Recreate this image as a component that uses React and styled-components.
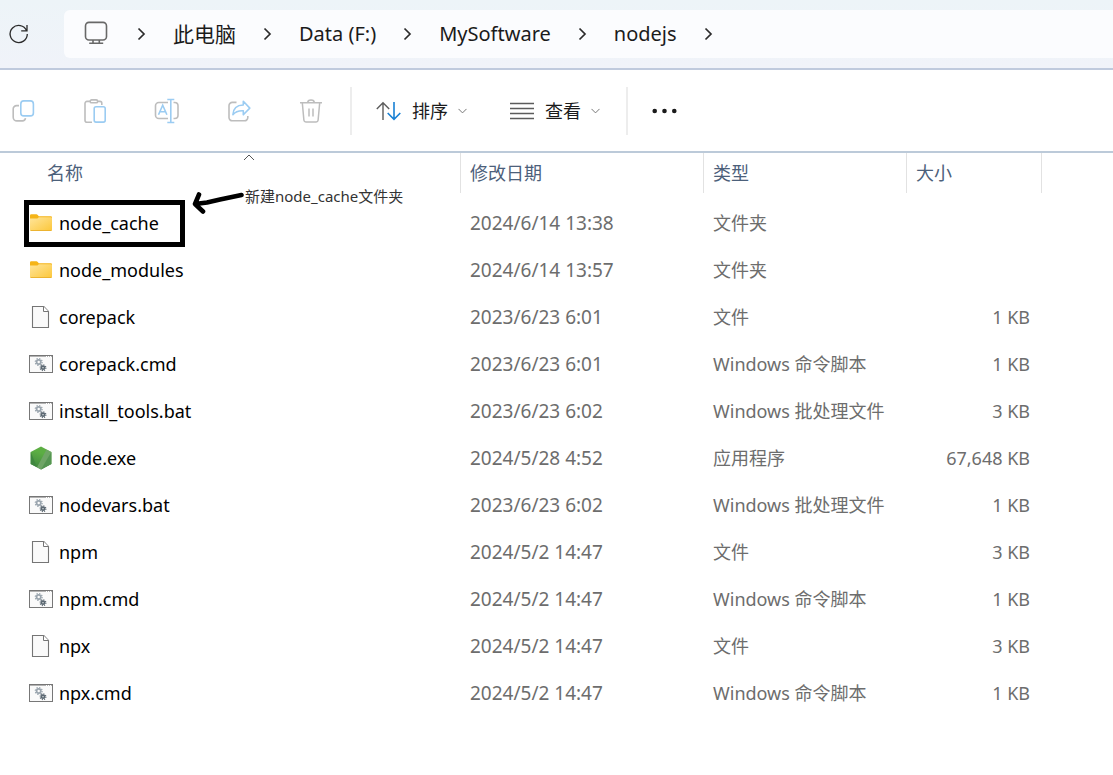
import React from "react";
import styled, { createGlobalStyle } from "styled-components";

const GlobalStyle = createGlobalStyle`
  * { box-sizing: border-box; }
  body {
    margin: 0;
    background: #ffffff;
    color: #1b1b1b;
    font-family: "Noto Sans", "Noto Sans CJK SC", sans-serif;
    font-size: 18px;
    line-height: 24px;
  }
  button {
    margin: 0;
    padding: 0;
    border: 0;
    background: none;
    color: inherit;
    font: inherit;
    cursor: pointer;
  }
  svg { display: block; flex: none; fill: none; }
`;

const AddressRow = styled.header`
  display: flex;
  align-items: center;
  height: 70px;
  padding-left: 8px;
  gap: 34px;
  background: linear-gradient(#edf4f8, #f0f3f9);
  border-bottom: 2px solid #bfcadd;
`;

const RefreshButton = styled.button`
  width: 22px;
  height: 22px;
`;

const AddressBar = styled.nav`
  display: flex;
  flex: 1;
  align-items: center;
  gap: 27px;
  height: 48px;
  padding-left: 20px;
  background: #fbfcfe;
  border-radius: 6px 0 0 6px;
  font-size: 20px;
  line-height: 28px;
`;

const Device = styled.span`
  margin-right: 2px;
  padding-bottom: 2px;
`;

const Crumb = styled.a`
  color: #1b1b1b;
  font-size: ${(p) => (p.$han ? 21 : 20)}px;
  text-decoration: none;
  white-space: nowrap;
`;

const Toolbar = styled.div`
  display: flex;
  align-items: center;
  height: 83px;
  border-bottom: 2px solid #bccad9;
`;

const ToolGroup = styled.div`
  display: flex;
  gap: 26px;
  margin-right: 16px;
`;

const ToolButton = styled.button`
  display: flex;
  align-items: center;
  justify-content: center;
  width: 46px;
  height: 46px;

  &:disabled { cursor: default; }
`;

const MenuGroup = styled.div`
  display: flex;
  align-items: center;
  gap: 42px;
  padding: 0 26px 0 24px;
  height: 48px;
  border: solid #ededed;
  border-width: 0 2px;
`;

const MenuButton = styled.button`
  display: flex;
  align-items: center;
  gap: 10px;
  white-space: nowrap;
`;

const MoreButton = styled.button`
  padding: 8px 24px;
`;

const FileTable = styled.table`
  width: 100%;
  table-layout: fixed;
  border-collapse: collapse;
`;

const Column = styled.col`
  width: ${(p) => (p.$width ? `${p.$width}px` : "auto")};
`;

const HeadCell = styled.th`
  height: 47px;
  padding: 0 0 0 ${(p) => (p.$first ? 38 : 0)}px;
  vertical-align: top;
  font-weight: 400;
`;

const HeadButton = styled.button`
  position: relative;
  display: block;
  width: 100%;
  height: 40px;
  padding-left: 9px;
  border-right: 1px solid #e2e2e2;
  color: #4c607a;
  text-align: left;
`;

const SortMark = styled.span`
  position: absolute;
  top: 1px;
  left: 50%;
  transform: translateX(-50%);
`;

const Cell = styled.td`
  height: 47px;
  padding: 0 12px 2px 9px;
  color: #6d6d6d;
  font-size: ${(p) => (p.$date ? 19 : 18)}px;
  text-align: ${(p) => p.$align || "left"};
  white-space: nowrap;
`;

const NameCell = styled.td`
  position: relative;
  height: 47px;
  padding: 0 0 2px 29px;
`;

const FileButton = styled.button`
  display: flex;
  align-items: center;
  gap: 6px;
  color: #000000;
  white-space: nowrap;
`;

const Highlight = styled.span`
  position: absolute;
  top: 0;
  left: 24px;
  width: 161px;
  height: 47px;
  border: 5px solid #000000;
  pointer-events: none;
`;

const Note = styled.span`
  position: absolute;
  top: -14px;
  left: 190px;
  display: flex;
  gap: 1px;
  color: #333333;
  font-size: 15px;
  line-height: 20px;
  white-space: nowrap;
  pointer-events: none;
`;

const GREY = "#bdbdbd";
const BLUE = "#9bccf2";

const RefreshIcon = () => (
  <svg width="22" height="22" viewBox="0 0 22 22" stroke="#2b2b2b" strokeWidth="1.3">
    <path d="M18.6 7.6A8.6 8.6 0 1 0 19.3 11M19 2v5.8h-5.8" />
  </svg>
);

const MonitorIcon = () => (
  <svg width="24" height="24" viewBox="0 0 24 24" stroke="#686868" strokeWidth="1.6">
    <rect x="1.5" y="1.4" width="21" height="17.6" rx="3.5" />
    <path d="M9 19v3M15.3 19v3M5.2 22.3h14" />
  </svg>
);

const CrumbArrow = () => (
  <svg width="9" height="14" viewBox="0 0 9 14" stroke="#2b2b2b" strokeWidth="1.7" aria-hidden="true">
    <path d="M1.5 1.5 7 7l-5.5 5.5" />
  </svg>
);

const CopyIcon = () => (
  <svg width="24" height="24" viewBox="0 0 24 24" strokeWidth="1.6">
    <path stroke={GREY} d="M8 6.6H5.6A3.4 3.4 0 0 0 2.2 10v8.2a3.7 3.7 0 0 0 3.7 3.7h5.6q2.6 0 3-2.7" />
    <rect stroke={BLUE} x="9.8" y="1.9" width="12.600" height="15" rx="3" />
  </svg>
);

const PasteIcon = () => (
  <svg width="24" height="24" viewBox="0 0 24 24" strokeWidth="1.6">
    <path stroke={GREY} d="M7.5 2.4H4a2 2 0 0 0-2 2v16.8a2 2 0 0 0 2 2h5M14.5 2.4H17a1.800 1.800 0 0 1 1.800 1.800V6" />
    <rect stroke={GREY} x="7.2" y="0.9" width="7.4" height="2.9" rx="1.4" />
    <rect stroke={BLUE} x="11.2" y="7.7" width="11" height="15.4" rx="1.8" />
  </svg>
);

const RenameIcon = () => (
  <svg width="26" height="26" viewBox="0 0 26 26" strokeWidth="1.6">
    <path stroke={GREY} d="M14 4.5H4.8a3.300 3.300 0 0 0-3.300 3.300v9.400a3.300 3.300 0 0 0 3.300 3.300H14M19.500 4.500h1.200a3.300 3.300 0 0 1 3.300 3.300v9.400a3.300 3.300 0 0 1-3.300 3.300h-1.200" />
    <path stroke={BLUE} d="M16.800 1.500v23M13.300 1.500h7M13.300 24.500h7M4.500 16.800l4.200-9.500 4.200 9.500M6 13.800h5.400" />
  </svg>
);

const ShareIcon = () => (
  <svg width="24" height="24" viewBox="0 0 24 24" strokeWidth="1.6" strokeLinejoin="round">
    <path stroke={GREY} d="M9.500 3.400H5.300A3.300 3.300 0 0 0 2 6.700v11.800a3.300 3.300 0 0 0 3.300 3.300h12.200a3.300 3.300 0 0 0 3.300-3.300V17" />
    <path stroke={BLUE} d="M16.300 2.200 22.800 9.100l-6.500 6.700v-4c-4.500-.2-8 .9-10.400 3.900C6.200 9.900 9.600 6.100 16.300 6z" />
  </svg>
);

const TrashIcon = () => (
  <svg width="24" height="24" viewBox="0 0 24 24" strokeWidth="1.5" stroke={GREY}>
    <path d="M1 3.700h22M8.700 3.700C8.700 2 10 1 12 1s3.300 1 3.300 2.700M3.300 3.700l1.600 17.500a2 2 0 0 0 2 1.800h10.200a2 2 0 0 0 2-1.800l1.600-17.500M10 9.500v8M14 9.500v8" />
  </svg>
);

const SortIcon = () => (
  <svg width="26" height="20" viewBox="0 0 26 20" strokeWidth="1.4">
    <path stroke="#5c5c5c" d="M7 19V1.800M.800 7.900 7 1.700l6.200 6.200" />
    <path stroke="#1880d4" strokeWidth="1.6" d="M18 1v17.200M11.700 12 18 18.300 24.300 12" />
  </svg>
);

const ListIcon = () => (
  <svg width="26" height="18" viewBox="0 0 26 18" stroke="#5c5c5c" strokeWidth="1.3">
    <path d="M1 1.500h24M1 6.500h24M1 11.500h24M1 16.500h24" />
  </svg>
);

const DownIcon = () => (
  <svg width="9" height="6" viewBox="0 0 9 6" stroke="#777777" aria-hidden="true">
    <path d="m.5.900 4 4 4-4" />
  </svg>
);

const UpIcon = () => (
  <svg width="12" height="7" viewBox="0 0 12 7" stroke="#555555">
    <path d="m1 6 5-5 5 5" />
  </svg>
);

const MoreIcon = () => (
  <svg width="26" height="6" viewBox="0 0 26 6">
    <g fill="#1b1b1b">
      <circle cx="2.700" cy="3" r="2.300" />
      <circle cx="12.500" cy="3" r="2.300" />
      <circle cx="22.300" cy="3" r="2.300" />
    </g>
  </svg>
);

const FolderIcon = () => (
  <svg width="24" height="24" viewBox="0 0 24 24">
    <defs>
      <linearGradient id="folderFront" x1="0" y1="0" x2="1" y2="1">
        <stop offset="0" stopColor="#ffe59b" />
        <stop offset="1" stopColor="#fcc73a" />
      </linearGradient>
    </defs>
    <path fill="#f5b417" d="M1 4.500Q1 3.300 2.200 3.300h5.200q.8 0 1.300.7l1.100 1.200h12.100q1.100 0 1.100 1.100V8H1z" />
    <path fill="url(#folderFront)" d="M1 7.600h6.800q.7 0 1.200-.6l.8-.800H22q1 0 1 1v11.600q0 1.100-1.100 1.100H2.100Q1 19.900 1 18.800z" />
    <path stroke="#eab02c" strokeWidth=".9" d="M1.500 19.500h21" />
  </svg>
);

const PageIcon = () => (
  <svg width="24" height="24" viewBox="0 0 24 24" stroke="#757575">
    <path fill="#fafafa" strokeWidth="1.100" d="M3.500 1.500h11.300l4.700 5v16h-16z" />
    <path fill="#ffffff" d="M14.500 1.500v5h5" />
  </svg>
);

const Gear = ({ x, y, r, color }) => (
  <g transform={`translate(${x} ${y})`} stroke={color}>
    <circle r={r} strokeWidth="1.700" />
    <circle r={r + 1.300} strokeWidth="1.300" strokeDasharray={`${(r + 1.3) * 0.39} ${(r + 1.3) * 0.395}`} />
  </g>
);

const ScriptIcon = () => (
  <svg width="24" height="24" viewBox="0 0 24 24">
    <rect x=".5" y="3.500" width="23" height="17" fill="#fafafa" stroke="#777777" />
    <path stroke="#777777" strokeWidth="1.500" d="M0 3.800h24" />
    <path stroke="#ffffff" strokeDasharray="1 1" d="M17 4.500h5" />
    <Gear x={9.7} y={10} r={2.1} color="#9aa5ae" />
    <Gear x={14} y={15.7} r={1.5} color="#5b6872" />
  </svg>
);

const NodeIcon = () => (
  <svg width="24" height="24" viewBox="0 0 24 24">
    <defs>
      <linearGradient id="nodeFace" x1="0.700" y1="0" x2="0.400" y2="1">
        <stop offset="0.300" stopColor="#5cae43" />
        <stop offset="1" stopColor="#3f873f" />
      </linearGradient>
    </defs>
    <path fill="url(#nodeFace)" d="M12 .500 22.300 6v12L12 23.500 1.700 18V6z" />
    <path fill="#3f873f" d="M1.700 6 8 21.300 1.700 18z" />
    <path fill="#6fa566" d="m17.500 3.400 4.800 2.600v12L12 23.500l-4-2.200z" />
    <path fill="#559552" d="M22.300 6v12L12 23.500z" />
  </svg>
);

const NoteArrow = () => (
  <svg width="54" height="30" viewBox="0 0 54 30" stroke="#000000" strokeWidth="4.6" strokeLinecap="round" strokeLinejoin="round">
    <path d="M51.500 9 30 13.500 17 16.500 5 18M9 8.500 5 18l8 7.500" />
  </svg>
);

const fileIcons = {
  folder: FolderIcon,
  page: PageIcon,
  script: ScriptIcon,
  node: NodeIcon,
};

const files = [
  { name: "node_cache", icon: "folder", date: "2024/6/14 13:38", type: "文件夹", size: "", note: "新建node_cache文件夹" },
  { name: "node_modules", icon: "folder", date: "2024/6/14 13:57", type: "文件夹", size: "" },
  { name: "corepack", icon: "page", date: "2023/6/23 6:01", type: "文件", size: "1 KB" },
  { name: "corepack.cmd", icon: "script", date: "2023/6/23 6:01", type: "Windows 命令脚本", size: "1 KB" },
  { name: "install_tools.bat", icon: "script", date: "2023/6/23 6:02", type: "Windows 批处理文件", size: "3 KB" },
  { name: "node.exe", icon: "node", date: "2024/5/28 4:52", type: "应用程序", size: "67,648 KB" },
  { name: "nodevars.bat", icon: "script", date: "2023/6/23 6:02", type: "Windows 批处理文件", size: "1 KB" },
  { name: "npm", icon: "page", date: "2024/5/2 14:47", type: "文件", size: "3 KB" },
  { name: "npm.cmd", icon: "script", date: "2024/5/2 14:47", type: "Windows 命令脚本", size: "1 KB" },
  { name: "npx", icon: "page", date: "2024/5/2 14:47", type: "文件", size: "3 KB" },
  { name: "npx.cmd", icon: "script", date: "2024/5/2 14:47", type: "Windows 命令脚本", size: "1 KB" },
];

const columns = [
  { label: "名称", width: 461 },
  { label: "修改日期", width: 243 },
  { label: "类型", width: 203 },
  { label: "大小", width: 135 },
];

const crumbs = [
  { label: "此电脑", han: true },
  { label: "Data (F:)" },
  { label: "MySoftware" },
  { label: "nodejs" },
];

const tools = [
  { label: "复制", Icon: CopyIcon },
  { label: "粘贴", Icon: PasteIcon },
  { label: "重命名", Icon: RenameIcon },
  { label: "共享", Icon: ShareIcon },
  { label: "删除", Icon: TrashIcon },
];

function FileRow({ file }) {
  const Icon = fileIcons[file.icon];
  return (
    <tr>
      <NameCell>
        <FileButton>
          <Icon />
          {file.name}
        </FileButton>
        {file.note && (
          <>
            <Highlight />
            <Note>
              <NoteArrow />
              {file.note}
            </Note>
          </>
        )}
      </NameCell>
      <Cell $date>{file.date}</Cell>
      <Cell>{file.type}</Cell>
      <Cell $align="right">{file.size}</Cell>
      <td />
    </tr>
  );
}

export default function App() {
  return (
    <>
      <GlobalStyle />
      <AddressRow>
        <RefreshButton aria-label="刷新">
          <RefreshIcon />
        </RefreshButton>
        <AddressBar>
          <Device>
            <MonitorIcon />
          </Device>
          <CrumbArrow />
          {crumbs.map((crumb) => (
            <React.Fragment key={crumb.label}>
              <Crumb href="#" $han={crumb.han}>{crumb.label}</Crumb>
              <CrumbArrow />
            </React.Fragment>
          ))}
        </AddressBar>
      </AddressRow>
      <Toolbar>
        <ToolGroup>
          {tools.map(({ label, Icon }) => (
            <ToolButton key={label} aria-label={label} disabled>
              <Icon />
            </ToolButton>
          ))}
        </ToolGroup>
        <MenuGroup>
          <MenuButton>
            <SortIcon />
            排序
            <DownIcon />
          </MenuButton>
          <MenuButton>
            <ListIcon />
            查看
            <DownIcon />
          </MenuButton>
        </MenuGroup>
        <MoreButton aria-label="更多">
          <MoreIcon />
        </MoreButton>
      </Toolbar>
      <FileTable>
        <colgroup>
          {columns.map((column) => (
            <Column key={column.label} $width={column.width} />
          ))}
          <Column />
        </colgroup>
        <thead>
          <tr>
            {columns.map((column, index) => (
              <HeadCell key={column.label} $first={index === 0} scope="col">
                <HeadButton>
                  {column.label}
                  {index === 0 && (
                    <SortMark>
                      <UpIcon />
                    </SortMark>
                  )}
                </HeadButton>
              </HeadCell>
            ))}
            <td />
          </tr>
        </thead>
        <tbody>
          {files.map((file) => (
            <FileRow key={file.name} file={file} />
          ))}
        </tbody>
      </FileTable>
    </>
  );
}
